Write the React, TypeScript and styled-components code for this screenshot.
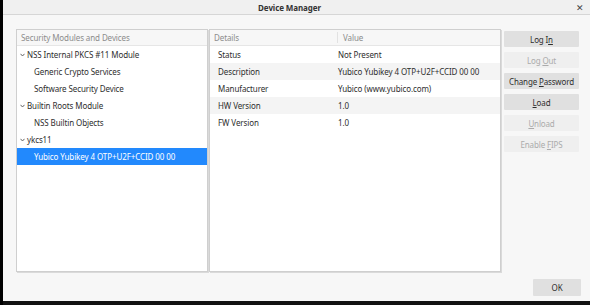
import styled, { createGlobalStyle } from "styled-components";

const GlobalStyle = createGlobalStyle`
  html, body {
    margin: 0;
    padding: 0;
    background: #000;
  }
  body {
    font-family: "Noto Sans", "Open Sans", sans-serif;
    font-size: 8px;
    letter-spacing: -0.1px;
    color: #2e2e2e;
  }
`

const Window = styled.div`
  width: 587px;
  height: 301px;
  margin-left: 3px;
  display: flex;
  flex-direction: column;
  background: #f7f7f7;
  border-bottom: 4px solid #111;
`

const TitleBar = styled.div`
  height: 15px;
  flex: none;
  display: flex;
  align-items: center;
  justify-content: center;
  position: relative;
  padding-right: 14px;
  background: #f0f0f0;
  border-bottom: 1px solid #d6d6d6;
  box-sizing: border-box;
  font-weight: bold;
  color: #333;
`

const CloseX = styled.span`
  position: absolute;
  right: 6px;
  top: 1px;
  font-size: 9px;
  font-weight: normal;
  color: #444;
`

const Body = styled.div`
  flex: 1;
  display: flex;
  flex-direction: column;
  padding: 14px 9px 5px 13px;
`

const MainRow = styled.div`
  display: flex;
  height: 243px;
`

const Panel = styled.div<{ $width: number }>`
  width: ${p => p.$width}px;
  flex: none;
  background: #fff;
  border: 1px solid #cfcfcf;
  box-shadow: 1px 1px 0 #dadada;
  box-sizing: border-box;
  margin-right: 1px;
`

const Header = styled.div`
  height: 16px;
  display: flex;
  align-items: center;
  background: #f7f7f7;
  border-bottom: 1px solid #e6e6e6;
  color: #8c8c8c;
  box-sizing: border-box;
`

const HeaderCell = styled.div<{ $width?: number; $divider?: boolean }>`
  width: ${p => (p.$width ? `${p.$width}px` : "auto")};
  flex: ${p => (p.$width ? "none" : 1)};
  padding-left: ${p => (p.$divider ? 5 : 4)}px;
  border-left: ${p => (p.$divider ? "1px solid #e2e2e2" : "none")};
  box-sizing: border-box;
  line-height: 11px;
`

const TreeRow = styled.div<{ $depth: number; $selected?: boolean }>`
  height: 17px;
  display: flex;
  align-items: center;
  padding-left: ${p => (p.$depth === 0 ? 3 : 17)}px;
  background: ${p => (p.$selected ? "#2289fd" : "transparent")};
  color: ${p => (p.$selected ? "#fff" : "#2e2e2e")};
`

const Chevron = styled.svg`
  width: 5px;
  height: 4px;
  margin-right: 2px;
`

const DetailRow = styled.div<{ $alt: boolean }>`
  height: 17px;
  display: flex;
  align-items: center;
  background: ${p => (p.$alt ? "#f4f4f4" : "#fff")};
`

const DetailKey = styled.div`
  width: 128px;
  padding-left: 8px;
  box-sizing: border-box;
`

const DetailValue = styled.div`
  flex: 1;
`

const ButtonColumn = styled.div`
  display: flex;
  flex-direction: column;
  gap: 5px;
  margin-left: 2px;
  margin-top: 2px;
  width: 75px;
`

const Button = styled.button<{ $disabled?: boolean }>`
  appearance: none;
  -webkit-appearance: none;
  height: 16px;
  width: 100%;
  padding: 0;
  border: 0;
  box-shadow: none;
  outline: none;
  border-radius: 1px;
  font-family: inherit;
  font-size: 8px;
  letter-spacing: -0.15px;
  white-space: nowrap;
  background: ${p => (p.$disabled ? "#efefef" : "#e0e0e0")};
  color: ${p => (p.$disabled ? "#ababab" : "#2e2e2e")};
`

const Footer = styled.div`
  display: flex;
  justify-content: flex-end;
  margin-top: 7px;
`

const OkButton = styled(Button)`
  width: 48px;
  height: 17px;
`

const tree = [
    { label: "NSS Internal PKCS #11 Module", depth: 0 },
    { label: "Generic Crypto Services", depth: 1 },
    { label: "Software Security Device", depth: 1 },
    { label: "Builtin Roots Module", depth: 0 },
    { label: "NSS Builtin Objects", depth: 1 },
    { label: "ykcs11", depth: 0 },
    { label: "Yubico Yubikey 4 OTP+U2F+CCID 00 00", depth: 1, selected: true },
]

const details = [
    ["Status", "Not Present"],
    ["Description", "Yubico Yubikey 4 OTP+U2F+CCID 00 00"],
    ["Manufacturer", "Yubico (www.yubico.com)"],
    ["HW Version", "1.0"],
    ["FW Version", "1.0"],
]

const buttons = [
    { pre: "Log I", key: "n", post: "", disabled: false },
    { pre: "Log ", key: "O", post: "ut", disabled: true },
    { pre: "Change ", key: "P", post: "assword", disabled: false },
    { pre: "", key: "L", post: "oad", disabled: false },
    { pre: "", key: "U", post: "nload", disabled: true },
    { pre: "Enable ", key: "F", post: "IPS", disabled: true },
]

const App = () => {
    return (
        <>
            <GlobalStyle/>
            <Window>
                <TitleBar>
                    Device Manager
                    <CloseX>✕</CloseX>
                </TitleBar>
                <Body>
                    <MainRow>
                        <Panel $width={192}>
                            <Header>
                                <HeaderCell>Security Modules and Devices</HeaderCell>
                            </Header>
                            {tree.map((item) => (
                                <TreeRow key={item.label} $depth={item.depth} $selected={item.selected}>
                                    {item.depth === 0 && (
                                        <Chevron viewBox="0 0 5 4">
                                            <path d="M0.5 0.8 L2.5 3 L4.5 0.8" fill="none" stroke="#555" strokeWidth="0.9"/>
                                        </Chevron>
                                    )}
                                    {item.label}
                                </TreeRow>
                            ))}
                        </Panel>
                        <Panel $width={292}>
                            <Header>
                                <HeaderCell $width={127}>Details</HeaderCell>
                                <HeaderCell $divider>Value</HeaderCell>
                            </Header>
                            {details.map(([k, v], i) => (
                                <DetailRow key={k} $alt={i % 2 === 1}>
                                    <DetailKey>{k}</DetailKey>
                                    <DetailValue>{v}</DetailValue>
                                </DetailRow>
                            ))}
                        </Panel>
                        <ButtonColumn>
                            {buttons.map((b) => (
                                <Button key={b.pre + b.key} $disabled={b.disabled}>
                                    {b.pre}<u>{b.key}</u>{b.post}
                                </Button>
                            ))}
                        </ButtonColumn>
                    </MainRow>
                    <Footer>
                        <OkButton>OK</OkButton>
                    </Footer>
                </Body>
            </Window>
        </>
    )
}

export default App;
